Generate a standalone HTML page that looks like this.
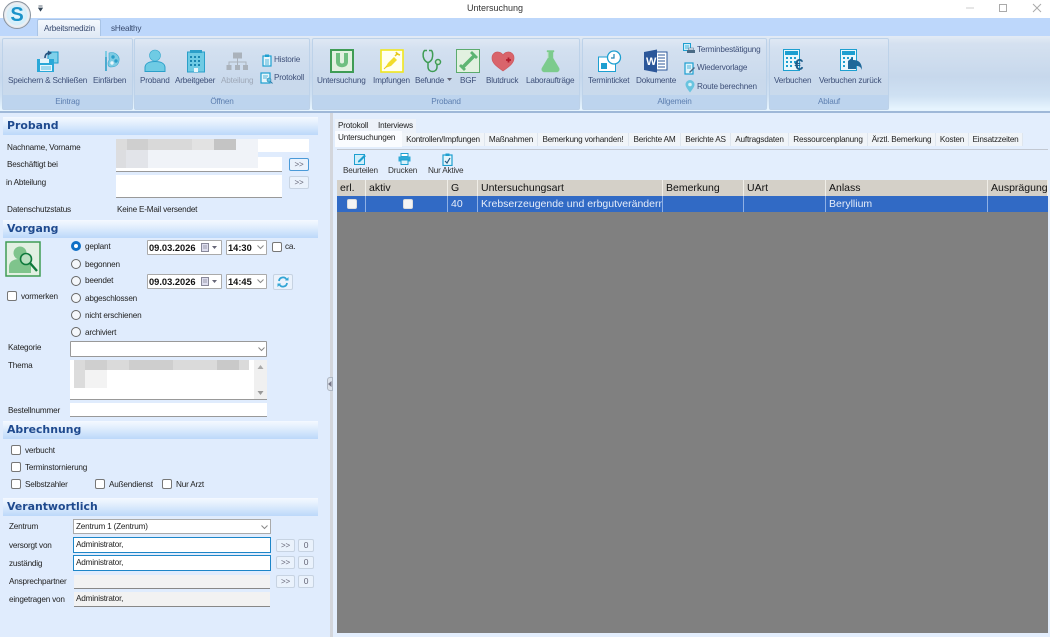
<!DOCTYPE html>
<html lang="de"><head><meta charset="utf-8"><title>Untersuchung</title>
<style>
*{box-sizing:border-box}
html,body{margin:0;padding:0;width:1050px;height:637px;overflow:hidden;background:#fff}
body{position:relative;font-family:"Liberation Sans",sans-serif;font-size:8.2px;letter-spacing:-.2px;color:#222;-webkit-font-smoothing:antialiased}
div,svg,span.a{position:absolute}
.t{position:absolute;white-space:nowrap;line-height:11px}
.rs{color:#3d4f78;font-size:8.2px}
.g{top:38px;height:72px;border:1px solid #bdd2e9;border-radius:2px;background:linear-gradient(#dfe8f4 0,#d3e0f0 15%,#c9d9ec 60%,#c9daed 100%)}
.gl{left:0;right:0;bottom:0;height:14px;background:#bdd4ee;color:#5d7fb0;font-size:8.2px;text-align:center;line-height:14px}
.h{left:3px;width:315px;height:18px;background:linear-gradient(#f4f9ff,#e3effd 35%,#bcd8fa);color:#1f4a8e;font:bold 10.9px "DejaVu Sans",sans-serif;letter-spacing:0;line-height:18px;padding-left:4px}
.f{background:#fff;border-bottom:1px solid #999}
.cb{width:10px;height:10px;border:1px solid #777;border-radius:2px;background:#fff}
.rd{width:10px;height:10px;border:1px solid #666;border-radius:50%;background:#f4f7fb}
.b{background:#eaf2fc;border:1px solid #c7d3e2;border-radius:2px;color:#667;text-align:center;font-size:8px;line-height:11px}
.cmb{background:#fff;border:1px solid #aaa;border-radius:1px;font-size:9.3px;letter-spacing:0;font-weight:bold;color:#111;line-height:15px;padding-left:1px}
.tab{top:133px;height:13px;background:#f0f4f8;border-right:1px solid #dfe6ee;line-height:13px;text-align:center;color:#222;white-space:nowrap}
.hc{top:180px;height:16px;background:#d4d0c8;border-right:1px solid #f0eee8;font-size:10.5px;letter-spacing:0;line-height:16px;padding-left:3px;color:#111;white-space:nowrap;overflow:hidden}
.rc{top:196px;height:16px;background:#316ac5;border-right:1px solid #8fb0e4;font-size:10.5px;letter-spacing:0;line-height:16px;padding-left:3px;color:#e6edf9;white-space:nowrap;overflow:hidden}
</style></head><body>

<!-- title bar -->
<div class="t" style="left:467px;top:3px;font-size:9px;letter-spacing:0;color:#333">Untersuchung</div>
<svg style="left:38px;top:5px" width="6" height="7"><path d="M0.5 1H4.5M0.5 3H4.5L2.5 6z" fill="#345" stroke="#345" stroke-width=".7"/></svg>
<svg style="left:960px;top:0" width="90" height="16"><path d="M6 8H14" stroke="#ccc" fill="none"/><rect x="39.5" y="4.500" width="7" height="7" fill="none" stroke="#aaa"/><path d="M73 4L81 12M81 4L73 12" stroke="#aaa" fill="none"/></svg>

<!-- tab strip -->
<div style="left:0;top:18px;width:1050px;height:18px;background:#bdd7fb"></div>
<div style="left:37px;top:19px;width:64px;height:18px;background:linear-gradient(#f4f8fd,#dfe9f5);border:1px solid #a9c4e6;border-bottom:0;border-radius:2px 2px 0 0"></div>
<div class="t" style="left:44px;top:23px;color:#36496e">Arbeitsmedizin</div>
<div class="t" style="left:111px;top:23px;color:#36496e">sHealthy</div>

<!-- ribbon -->
<div style="left:0;top:36px;width:1050px;height:77px;background:linear-gradient(#e3ebf5 0,#d5e1f0 10%,#c7d8ec 55%,#cfe1f3 80%,#e6f4fe 97%);border-bottom:2px solid #9fb8d8"></div>
<div class="g" style="left:2px;width:131px"><div class="gl">Eintrag</div></div>
<div class="g" style="left:134px;width:176px"><div class="gl">Öffnen</div></div>
<div class="g" style="left:312px;width:268px"><div class="gl">Proband</div></div>
<div class="g" style="left:582px;width:185px"><div class="gl">Allgemein</div></div>
<div class="g" style="left:769px;width:120px"><div class="gl">Ablauf</div></div>

<!-- logo -->
<div style="left:3px;top:1px;width:28px;height:28px;border-radius:50%;background:radial-gradient(circle at 50% 50%,#eaf7fd 0,#d3eefa 52%,#eef0f3 62%,#cfd4da 80%,#8b95a1 100%);border:1px solid #8a949f"></div>
<div class="t" style="left:4px;top:3px;width:26px;letter-spacing:0;text-align:center;font:bold 20px/24px 'Liberation Sans',sans-serif;color:#1b93c9">S</div>

<!-- ribbon icons -->
<svg style="left:35px;top:49px" width="26" height="25" viewBox="0 0 26 25"><path d="M13 3h10v11H13z" fill="#7fd0ea" stroke="#1a9ccb"/><path d="M2 10H19V23H2z" fill="#2aa8d8"/><rect x="5" y="10" width="9" height="4" fill="#e5f5fb"/><rect x="5" y="16" width="12" height="6" fill="#e5f5fb"/><path d="M6 18H16M6 20H16" stroke="#2aa8d8" stroke-width=".8"/><path d="M10 9C10 5 12 4 15 4" fill="none" stroke="#26527f" stroke-width="1.6"/><path d="M13 1.500L17 4 13 6.500z" fill="#26527f"/></svg>
<svg style="left:99px;top:50px" width="22" height="22" viewBox="0 0 22 22"><path d="M10 3c6-2 11 3 10 8s-5 6-8 6-3-2-3-4 2-2 1-5z" fill="#7ecbe3" stroke="#37a8cf" stroke-width=".6"/><circle cx="14" cy="7" r="1.700" fill="#2b9fc9"/><circle cx="17" cy="11" r="1.700" fill="#2b9fc9"/><circle cx="13" cy="13" r="1.700" fill="#e8f6fb"/><path d="M7 1v6" stroke="#7ecbe3" stroke-width="2"/><path d="M7 7v14" stroke="#2b9fc9" stroke-width="1.600"/></svg>
<svg style="left:144px;top:49px" width="22" height="24" viewBox="0 0 22 24"><circle cx="11" cy="6.500" r="5.500" fill="#6fcbe4" stroke="#3aa9cd" stroke-width=".6"/><path d="M1 22.500v-4c0-4 4-6 10-6s10 2 10 6v4z" fill="#6fcbe4" stroke="#2b9fc9"/></svg>
<svg style="left:186px;top:49px" width="20" height="24" viewBox="0 0 20 24"><rect x="1.500" y="3" width="17" height="20" fill="#6fcbe4" stroke="#2b9fc9"/><rect x="4" y="1" width="12" height="3" fill="#2b9fc9"/><path d="M4 7h2v2H4zM8 7h2v2H8zM12 7h2v2H12zM4 11h2v2H4zM8 11h2v2H8zM12 11h2v2H12zM4 15h2v2H4zM8 15h2v2H8zM12 15h2v2H12z" fill="#1a86b0"/><rect x="8" y="19" width="4" height="4" fill="#e8f6fb"/></svg>
<svg style="left:226px;top:52px" width="23" height="19" viewBox="0 0 23 19"><rect x="7" y="0.500" width="9" height="6" fill="#aab2bb"/><rect x="0.500" y="13" width="5" height="5" fill="#aab2bb"/><rect x="9" y="13" width="5" height="5" fill="#aab2bb"/><rect x="17" y="13" width="5" height="5" fill="#aab2bb"/><path d="M11.500 6v7M3 13v-3h17v3" fill="none" stroke="#aab2bb"/></svg>
<svg style="left:262px;top:54px" width="10" height="13" viewBox="0 0 10 13"><rect x="1" y="2" width="8" height="10" fill="#e8f6fb" stroke="#1d9fd0" stroke-width="1.200"/><rect x="3" y="0.500" width="4" height="2.500" fill="#1d9fd0"/><path d="M3 6h4M3 8h4M3 10h4" stroke="#1d9fd0" stroke-width=".8"/></svg>
<svg style="left:260px;top:72px" width="13" height="12" viewBox="0 0 13 12"><rect x="1" y="1" width="9" height="10" fill="#e8f6fb" stroke="#1d9fd0" stroke-width="1.200"/><path d="M3 4h5M3 6h4" stroke="#1d9fd0" stroke-width=".8"/><circle cx="9" cy="8" r="2" fill="#5ec2e0" stroke="#2a7aa8" stroke-width=".6"/><path d="M10.500 9.500L12.500 11.500" stroke="#2a7aa8"/></svg>

<svg style="left:330px;top:49px" width="25" height="24" viewBox="0 0 25 24"><rect x="0" y="0" width="24" height="24" fill="#e2f1e0"/><rect x="1" y="1" width="22" height="22" fill="none" stroke="#3f9c55" stroke-width="2"/><path d="M6 4v9c0 7 12 7 12 0V4h-4v9c0 2-4 2-4 0V4z" fill="#6fbf80"/></svg>
<svg style="left:380px;top:49px" width="24" height="24" viewBox="0 0 24 24"><rect x="1" y="1" width="22" height="22" fill="#fffff0" stroke="#f0e61e" stroke-width="1.600"/><path d="M5 19l3-5 6-6 3 3-6 6z" fill="#f2dc2a"/><path d="M15 7l3-3M17 5l3 1M17 5l-1-2" stroke="#e7c91a" stroke-width="1.500"/><path d="M4 20l3-3" stroke="#e7c91a"/></svg>
<svg style="left:421px;top:49px" width="23" height="24" viewBox="0 0 23 24"><path d="M6 1.500H3.500C2 3 1.500 7 3 10c1 2 3 3.500 4 3.500S10 12 11 10c1-3 1-7-.5-8.500H8M7 13.500V18c0 6 9 6 9 0v-3" fill="none" stroke="#3f9c55" stroke-width="1.500"/><circle cx="17" cy="13" r="2.500" fill="#cfe6d5" stroke="#3f9c55" stroke-width="1.500"/></svg>
<svg style="left:456px;top:49px" width="24" height="24" viewBox="0 0 24 24"><rect x=".5" y=".5" width="23" height="23" fill="#e2f1e0" stroke="#5cab6e" stroke-width="1"/><path d="M7 18L18 7" stroke="#5eb573" stroke-width="3.500"/><path d="M3 17l5 5 2-2-5-5zM14 4l6 6 2-2-6-6z" fill="#5eb573"/></svg>
<svg style="left:491px;top:51px" width="24" height="21" viewBox="0 0 24 21"><path d="M12 20C5 15 1 12 1 7c0-4 3-6 5.500-6S11 2.500 12 4c1-1.500 3-3 5.500-3S23 3 23 7c0 5-4 8-11 13z" fill="#d9646b" stroke="#cc5a60" stroke-width=".7"/><path d="M15 9h5M17.500 6.500v5" stroke="#b01c2c" stroke-width="1.800"/></svg>
<svg style="left:541px;top:50px" width="19" height="23" viewBox="0 0 19 23"><path d="M6 .5h7v1.500h-1v6l6 10c1 2-.5 4-2 4H3c-1.500 0-3-2-2-4l6-10V2H6z" fill="#7ccb8d" stroke="#7ccb8d" stroke-width=".4"/><path d="M7 2v6" stroke="#bfe4c7"/></svg>

<svg style="left:598px;top:50px" width="24" height="22" viewBox="0 0 24 22"><rect x=".5" y="7" width="17" height="14.500" fill="#fff" stroke="#1d9fd0"/><rect x="3" y="13" width="6" height="6" fill="#1d9fd0"/><circle cx="16" cy="7.500" r="6.500" fill="#fff" stroke="#1d9fd0" stroke-width="1.300"/><path d="M16 4v4h-3" fill="none" stroke="#1d85b5" stroke-width="1.200"/></svg>
<svg style="left:644px;top:49px" width="24" height="24" viewBox="0 0 24 24"><path d="M8 3h15v18H8z" fill="#fff" stroke="#2b579a"/><path d="M14 6h7M14 9h7M14 12h7M14 15h7M14 18h7" stroke="#2b579a"/><path d="M0 3l13-2.500v23L0 21z" fill="#2b579a"/><text x="2" y="16" font-size="11" font-weight="bold" fill="#fff" font-family="Liberation Sans">W</text></svg>
<svg style="left:683px;top:43px" width="13" height="12" viewBox="0 0 13 12"><rect x=".5" y=".5" width="7" height="7" fill="#cdeefb" stroke="#1d9fd0"/><path d="M2 3h4M2 5h4" stroke="#1d9fd0" stroke-width=".7"/><rect x="4" y="7" width="8" height="3" fill="#4a6b86"/><rect x="5.500" y="5" width="5" height="2" fill="#dfe8f0" stroke="#4a6b86" stroke-width=".5"/></svg>
<svg style="left:684px;top:62px" width="12" height="13" viewBox="0 0 12 13"><rect x="1" y="1" width="8" height="11" fill="#dff3fa" stroke="#1d9fd0" stroke-width="1.200"/><path d="M3 4h4M3 6h4" stroke="#1d9fd0" stroke-width=".8"/><path d="M5 10l5-5 1 1-5 5z" fill="#4a6b86"/></svg>
<svg style="left:685px;top:80px" width="10" height="13" viewBox="0 0 10 13"><path d="M5 12.500C2 8.500.5 6.500.5 4.500a4.500 4.500 0 0 1 9 0C9.500 6.500 8 8.500 5 12.500z" fill="#69c4df"/><circle cx="5" cy="4.500" r="1.800" fill="#d9f1f8"/></svg>

<svg style="left:783px;top:49px" width="25" height="24" viewBox="0 0 25 24"><rect x=".5" y=".5" width="16" height="21" fill="#e9f7fc" stroke="#1d9fd0"/><rect x="2" y="2" width="13" height="4" fill="#1d9fd0"/><path d="M3 8h2v2H3zM7 8h2v2H7zM11 8h2v2h-2zM3 12h2v2H3zM7 12h2v2H7zM11 12h2v2h-2zM3 16h2v2H3zM7 16h2v2H7z" fill="#1d9fd0"/><text x="11.500" y="21" font-size="16" font-weight="bold" fill="#1e5f8c" font-family="Liberation Sans">€</text></svg>
<svg style="left:840px;top:49px" width="24" height="24" viewBox="0 0 24 24"><rect x=".5" y=".5" width="16" height="21" fill="#e9f7fc" stroke="#1d9fd0"/><rect x="2" y="2" width="13" height="4" fill="#1d9fd0"/><path d="M3 8h2v2H3zM7 8h2v2H7zM11 8h2v2h-2zM3 12h2v2H3zM3 16h2v2H3z" fill="#1d9fd0"/><path d="M8 12l5-4v3c5 0 9 2 9 10-1-3-3-4-5-4v0h-1v3H8z" fill="#20699a"/></svg>

<!-- ribbon labels -->
<div class="t rs" style="left:8px;top:75px">Speichern &amp; Schließen</div>
<div class="t rs" style="left:93px;top:75px">Einfärben</div>
<div class="t rs" style="left:140px;top:75px">Proband</div>
<div class="t rs" style="left:175px;top:75px">Arbeitgeber</div>
<div class="t rs" style="left:221px;top:75px;color:#9fa9b8">Abteilung</div>
<div class="t rs" style="left:274px;top:54px">Historie</div>
<div class="t rs" style="left:274px;top:72px">Protokoll</div>
<div class="t rs" style="left:317px;top:75px">Untersuchung</div>
<div class="t rs" style="left:373px;top:75px">Impfungen</div>
<div class="t rs" style="left:415px;top:75px">Befunde</div>
<svg style="left:447px;top:78px" width="5" height="4"><path d="M0 0h5L2.500 3z" fill="#667"/></svg>
<div class="t rs" style="left:460px;top:75px">BGF</div>
<div class="t rs" style="left:486px;top:75px">Blutdruck</div>
<div class="t rs" style="left:526px;top:75px">Laboraufträge</div>
<div class="t rs" style="left:588px;top:75px">Terminticket</div>
<div class="t rs" style="left:636px;top:75px">Dokumente</div>
<div class="t rs" style="left:697px;top:44px">Terminbestätigung</div>
<div class="t rs" style="left:697px;top:62px">Wiedervorlage</div>
<div class="t rs" style="left:697px;top:81px">Route berechnen</div>
<div class="t rs" style="left:774px;top:75px">Verbuchen</div>
<div class="t rs" style="left:819px;top:75px">Verbuchen zurück</div>

<!-- panels -->
<div style="left:0;top:113px;width:330px;height:524px;background:#e0ecfd"></div>
<div style="left:330px;top:113px;width:3px;height:524px;background:#d3d6dc"></div>
<div style="left:333px;top:113px;width:717px;height:524px;background:#e3eefd"></div>
<div style="left:327px;top:377px;width:6px;height:14px;background:#dbe1ea;border:1px solid #aeb6c2;border-radius:3px 0 0 3px"></div>
<svg style="left:328px;top:381px" width="4" height="6"><path d="M3.500 0v6L0 3z" fill="#778"/></svg>

<!-- Proband -->
<div class="h" style="top:117px">Proband</div>
<div class="t" style="left:7px;top:142px">Nachname, Vorname</div>
<div style="left:116px;top:139px;width:193px;height:13px;background:#fff"></div>
<div style="left:116px;top:139px;width:11px;height:11px;background:#dcdcdc"></div>
<div style="left:127px;top:139px;width:21px;height:11px;background:#cfcfcf"></div>
<div style="left:148px;top:139px;width:44px;height:11px;background:#d9d9d9"></div>
<div style="left:192px;top:139px;width:22px;height:11px;background:#e2e2e2"></div>
<div style="left:214px;top:139px;width:22px;height:11px;background:#c4c4c4"></div>
<div style="left:236px;top:139px;width:22px;height:11px;background:#f0f3f8"></div>
<div class="f" style="left:116px;top:157px;width:166px;height:15px"></div>
<div style="left:116px;top:150px;width:142px;height:18px;background:#f0f3f8"></div>
<div style="left:116px;top:150px;width:10px;height:18px;background:#dcdde0"></div>
<div style="left:126px;top:150px;width:22px;height:18px;background:#e2e4e9"></div>
<div class="t" style="left:7px;top:159px">Beschäftigt bei</div>
<div class="b" style="left:289px;top:158px;width:20px;height:13px;border-color:#4a9ad8">&gt;&gt;</div>
<div class="t" style="left:6px;top:177px">in Abteilung</div>
<div class="f" style="left:116px;top:175px;width:166px;height:23px"></div>
<div class="b" style="left:289px;top:176px;width:20px;height:13px">&gt;&gt;</div>
<div class="t" style="left:7px;top:204px">Datenschutzstatus</div>
<div class="t" style="left:117px;top:204px">Keine E-Mail versendet</div>

<!-- Vorgang -->
<div class="h" style="top:220px">Vorgang</div>
<svg style="left:5px;top:241px" width="36" height="36" viewBox="0 0 36 36"><rect x="1" y="1" width="34" height="34" fill="#e2f0e2" stroke="#3f9c55" stroke-width="1.500"/><circle cx="15" cy="12" r="6.500" fill="#7fc48c"/><path d="M4 32v-6c0-6 5-8 11-8s11 2 11 8v6z" fill="#7fc48c"/><circle cx="21" cy="18" r="5.500" fill="#b9e0c0" stroke="#0f7a3c" stroke-width="1.600"/><path d="M25 22l7 8" stroke="#0f7a3c" stroke-width="2.400"/></svg>
<div class="cb" style="left:7px;top:291px"></div>
<div class="t" style="left:21px;top:291px">vormerken</div>

<div class="rd" style="left:71px;top:241px;border:3px solid #0f6fc6;background:#fff"></div>
<div class="t" style="left:85px;top:241px">geplant</div>
<div class="rd" style="left:71px;top:259px"></div>
<div class="t" style="left:85px;top:259px">begonnen</div>
<div class="rd" style="left:71px;top:276px"></div>
<div class="t" style="left:85px;top:275px">beendet</div>
<div class="rd" style="left:71px;top:293px"></div>
<div class="t" style="left:85px;top:293px">abgeschlossen</div>
<div class="rd" style="left:71px;top:310px"></div>
<div class="t" style="left:85px;top:310px">nicht erschienen</div>
<div class="rd" style="left:71px;top:327px"></div>
<div class="t" style="left:85px;top:327px">archiviert</div>

<div class="cmb" style="left:147px;top:240px;width:75px;height:15px">09.03.2026</div>
<svg style="left:201px;top:243px" width="20" height="9"><rect x=".5" y=".5" width="7" height="8" fill="#dde" stroke="#889"/><path d="M2 3h4M2 5h4" stroke="#889" stroke-width=".7"/><path d="M11 3h5l-2.500 3z" fill="#667"/></svg>
<div class="cmb" style="left:226px;top:240px;width:41px;height:15px">14:30</div>
<svg style="left:257px;top:245px" width="7" height="5"><path d="M.5 .5L3.500 3.500 6.500 .5" fill="none" stroke="#888"/></svg>
<div class="cb" style="left:272px;top:242px"></div>
<div class="t" style="left:285px;top:241px">ca.</div>
<div class="cmb" style="left:147px;top:274px;width:75px;height:15px">09.03.2026</div>
<svg style="left:201px;top:277px" width="20" height="9"><rect x=".5" y=".5" width="7" height="8" fill="#dde" stroke="#889"/><path d="M2 3h4M2 5h4" stroke="#889" stroke-width=".7"/><path d="M11 3h5l-2.500 3z" fill="#667"/></svg>
<div class="cmb" style="left:226px;top:274px;width:41px;height:15px">14:45</div>
<svg style="left:257px;top:279px" width="7" height="5"><path d="M.5 .5L3.500 3.500 6.500 .5" fill="none" stroke="#888"/></svg>
<div class="b" style="left:273px;top:274px;width:20px;height:16px"></div>
<svg style="left:277px;top:276px" width="12" height="12" viewBox="0 0 12 12"><path d="M2 5A4 4 0 0 1 9.500 3.500M10 7A4 4 0 0 1 2.500 8.500" fill="none" stroke="#32a5d5" stroke-width="1.800"/><path d="M8 4.500h3.500V1zM4 7.500H.5V11z" fill="#32a5d5"/></svg>

<div class="t" style="left:8px;top:342px">Kategorie</div>
<div style="left:70px;top:341px;width:197px;height:16px;background:#fff;border:1px solid #999;border-radius:1px"></div>
<svg style="left:258px;top:347px" width="7" height="5"><path d="M.5 .5L3.500 3.500 6.500 .5" fill="none" stroke="#888"/></svg>
<div class="t" style="left:8px;top:360px">Thema</div>
<div class="f" style="left:70px;top:360px;width:197px;height:40px"></div>
<div style="left:74px;top:360px;width:175px;height:10px;background:#dadada"></div>
<div style="left:85px;top:360px;width:22px;height:10px;background:#cfcfcf"></div>
<div style="left:129px;top:360px;width:44px;height:10px;background:#cecece"></div>
<div style="left:217px;top:360px;width:22px;height:10px;background:#c9c9c9"></div>
<div style="left:74px;top:370px;width:11px;height:18px;background:#dcdcdc"></div>
<div style="left:85px;top:370px;width:22px;height:18px;background:#f3f3f3"></div>
<div style="left:254px;top:360px;width:13px;height:39px;background:#f0f0f0"></div>
<svg style="left:256px;top:364px" width="9" height="32"><path d="M1.500 5L4.500 1 7.500 5z" fill="#aaa"/><path d="M1.500 27L4.500 31 7.500 27z" fill="#999"/></svg>
<div class="t" style="left:8px;top:405px">Bestellnummer</div>
<div class="f" style="left:70px;top:403px;width:197px;height:14px"></div>

<!-- Abrechnung -->
<div class="h" style="top:421px">Abrechnung</div>
<div class="cb" style="left:11px;top:445px"></div><div class="t" style="left:25px;top:445px">verbucht</div>
<div class="cb" style="left:11px;top:462px"></div><div class="t" style="left:25px;top:462px">Terminstornierung</div>
<div class="cb" style="left:11px;top:479px"></div><div class="t" style="left:25px;top:479px">Selbstzahler</div>
<div class="cb" style="left:95px;top:479px"></div><div class="t" style="left:109px;top:479px">Außendienst</div>
<div class="cb" style="left:162px;top:479px"></div><div class="t" style="left:176px;top:479px">Nur Arzt</div>

<!-- Verantwortlich -->
<div class="h" style="top:498px">Verantwortlich</div>
<div class="t" style="left:9px;top:521px">Zentrum</div>
<div style="left:73px;top:519px;width:198px;height:15px;background:#fff;border:1px solid #aaa;padding-left:2px;line-height:13px;white-space:nowrap">Zentrum 1 (Zentrum)</div>
<svg style="left:261px;top:525px" width="7" height="5"><path d="M.5 .5L3.500 3.500 6.500 .5" fill="none" stroke="#888"/></svg>
<div class="t" style="left:9px;top:540px">versorgt von</div>
<div style="left:73px;top:537px;width:198px;height:16px;background:#fff;border:1px solid #1d86c8;padding-left:2px;line-height:13px">Administrator,</div>
<div class="b" style="left:276px;top:539px;width:19px;height:13px">&gt;&gt;</div><div class="b" style="left:298px;top:539px;width:16px;height:13px;font-size:8.500px">0</div>
<div class="t" style="left:9px;top:558px">zuständig</div>
<div style="left:73px;top:555px;width:198px;height:16px;background:#fff;border:1px solid #1d86c8;padding-left:2px;line-height:13px">Administrator,</div>
<div class="b" style="left:276px;top:556px;width:19px;height:13px">&gt;&gt;</div><div class="b" style="left:298px;top:556px;width:16px;height:13px;font-size:8.500px">0</div>
<div class="t" style="left:9px;top:576px">Ansprechpartner</div>
<div style="left:74px;top:575px;width:196px;height:14px;background:#f2f2f2;border-bottom:1px solid #888"></div>
<div class="b" style="left:276px;top:575px;width:19px;height:13px">&gt;&gt;</div><div class="b" style="left:298px;top:575px;width:16px;height:13px;font-size:8.500px">0</div>
<div class="t" style="left:9px;top:594px">eingetragen von</div>
<div style="left:74px;top:592px;width:196px;height:15px;background:#f2f2f2;border-bottom:1px solid #888;padding-left:2px;line-height:13px">Administrator,</div>

<!-- right tabs -->
<div style="left:335px;top:119px;width:41px;height:14px;background:#edf2f9;line-height:13px;padding-left:3px">Protokoll</div>
<div style="left:375px;top:119px;width:41px;height:14px;background:#edf2f9;line-height:13px;padding-left:3px">Interviews</div>
<div style="left:335px;top:131px;width:67px;height:16px;background:#fafcff;line-height:14px;padding-left:3px">Untersuchungen</div>
<div class="tab" style="left:402px;width:83px">Kontrollen/Impfungen</div>
<div class="tab" style="left:485px;width:53px">Maßnahmen</div>
<div class="tab" style="left:538px;width:91px">Bemerkung vorhanden!</div>
<div class="tab" style="left:629px;width:52px">Berichte AM</div>
<div class="tab" style="left:681px;width:50px">Berichte AS</div>
<div class="tab" style="left:731px;width:58px">Auftragsdaten</div>
<div class="tab" style="left:789px;width:79px">Ressourcenplanung</div>
<div class="tab" style="left:868px;width:68px">Ärztl. Bemerkung</div>
<div class="tab" style="left:936px;width:33px">Kosten</div>
<div class="tab" style="left:969px;width:54px">Einsatzzeiten</div>
<div style="left:337px;top:149px;width:711px;height:1px;background:#c2c8d2"></div>

<!-- toolbar -->
<svg style="left:354px;top:153px" width="13" height="12" viewBox="0 0 13 12"><rect x=".5" y="1.500" width="10" height="10" fill="#cfeefa" stroke="#1d9fd0"/><path d="M4 8l6-6 2 1-6 6-2 .5z" fill="#1d9fd0"/></svg>
<svg style="left:398px;top:153px" width="13" height="12" viewBox="0 0 13 12"><rect x="3" y=".5" width="7" height="3" fill="#fff" stroke="#1d9fd0"/><rect x=".5" y="3.500" width="12" height="5" fill="#2fa9d6"/><rect x="3" y="7" width="7" height="4.500" fill="#d8f1fa" stroke="#1d9fd0"/></svg>
<svg style="left:442px;top:153px" width="11" height="13" viewBox="0 0 11 13"><rect x="1" y="2" width="9" height="10.500" fill="#e4f5fb" stroke="#1d9fd0" stroke-width="1.200"/><rect x="3.500" y=".5" width="4" height="2.500" fill="#1d9fd0"/><path d="M3 8l2 2 3-5" fill="none" stroke="#25567e" stroke-width="1.200"/></svg>
<div class="t" style="left:343px;top:165px;color:#333">Beurteilen</div>
<div class="t" style="left:388px;top:165px;color:#333">Drucken</div>
<div class="t" style="left:428px;top:165px;color:#333">Nur Aktive</div>

<!-- grid -->
<div style="left:337px;top:180px;width:711px;height:453px;background:#808080"></div>
<div class="hc" style="left:337px;width:29px">erl.</div>
<div class="hc" style="left:366px;width:82px">aktiv</div>
<div class="hc" style="left:448px;width:30px">G</div>
<div class="hc" style="left:478px;width:185px">Untersuchungsart</div>
<div class="hc" style="left:663px;width:81px">Bemerkung</div>
<div class="hc" style="left:744px;width:82px">UArt</div>
<div class="hc" style="left:826px;width:162px">Anlass</div>
<div class="hc" style="left:988px;width:60px">Ausprägung</div>
<div class="rc" style="left:337px;width:29px"></div>
<div class="rc" style="left:366px;width:82px"></div>
<div class="rc" style="left:448px;width:30px">40</div>
<div class="rc" style="left:478px;width:185px">Krebserzeugende und erbgutverändern</div>
<div class="rc" style="left:663px;width:81px"></div>
<div class="rc" style="left:744px;width:82px"></div>
<div class="rc" style="left:826px;width:162px">Beryllium</div>
<div class="rc" style="left:988px;width:60px;border-right:0"></div>
<div class="cb" style="left:347px;top:199px;background:#f4f4f4;border-color:#ddd"></div>
<div class="cb" style="left:403px;top:199px;background:#f4f4f4;border-color:#ddd"></div>

</body></html>
